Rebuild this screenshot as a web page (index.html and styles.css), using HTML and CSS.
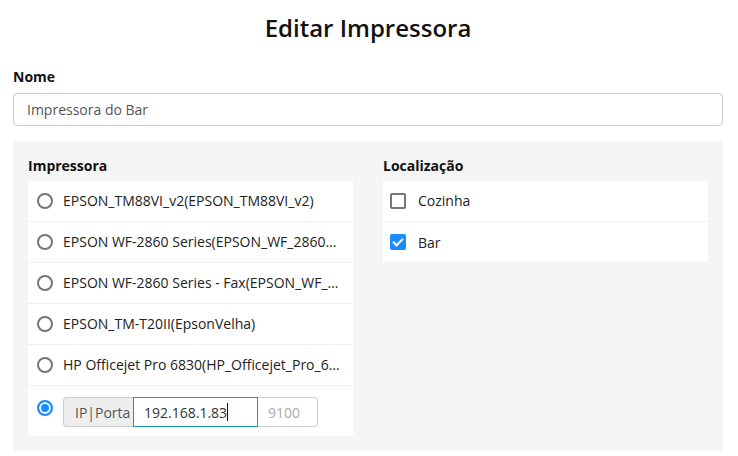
FILE: index.html
```html
<!DOCTYPE html>
<html lang="pt">
<head>
<meta charset="utf-8">
<title>Editar Impressora</title>
<link rel="stylesheet" href="styles.css">
</head>
<body>
<main class="page">
  <h1 class="title">Editar Impressora</h1>

  <label class="label" for="nome">Nome</label>
  <input class="text-input" id="nome" type="text" value="Impressora do Bar">

  <section class="panel">
    <div class="column">
      <div class="label">Impressora</div>
      <ul class="list">
        <li class="row"><input class="radio" type="radio" name="p"><span class="row-text">EPSON_TM88VI_v2(EPSON_TM88VI_v2)</span></li>
        <li class="row"><input class="radio" type="radio" name="p"><span class="row-text">EPSON WF-2860 Series(EPSON_WF_2860_Series)</span></li>
        <li class="row"><input class="radio" type="radio" name="p"><span class="row-text">EPSON WF-2860 Series - Fax(EPSON_WF_2860_Series_Fax)</span></li>
        <li class="row"><input class="radio" type="radio" name="p"><span class="row-text">EPSON_TM-T20II(EpsonVelha)</span></li>
        <li class="row"><input class="radio" type="radio" name="p"><span class="row-text">HP Officejet Pro 6830(HP_Officejet_Pro_6830)</span></li>
        <li class="row row-ip">
          <input class="radio" type="radio" name="p" checked>
          <div class="ip-group">
            <span class="addon">IP|Porta</span>
            <div class="ip-field">192.168.1.83<span class="caret"></span></div>
            <div class="port-field">9100</div>
          </div>
        </li>
      </ul>
    </div>
    <div class="column">
      <div class="label">Localização</div>
      <ul class="list">
        <li class="row row-check"><input class="check" type="checkbox"><span class="row-text">Cozinha</span></li>
        <li class="row row-check"><input class="check" type="checkbox" checked><span class="row-text">Bar</span></li>
      </ul>
    </div>
  </section>
</main>
</body>
</html>
```

FILE: styles.css
```css
* { box-sizing: border-box; }

html, body {
  margin: 0;
  padding: 0;
  background: #ffffff;
}

body {
  font-family: "Open Sans", "Noto Sans", "Liberation Sans", sans-serif;
  color: #222;
  font-size: 14px;
}

.page {
  padding: 0 15px 0 13px;
}

.title {
  margin: 0;
  padding-top: 12px;
  height: 44px;
  font-size: 24px;
  line-height: 32px;
  font-weight: 600;
  text-align: center;
  color: #111;
}

.label {
  display: block;
  font-weight: 700;
  font-size: 14px;
  line-height: 20px;
  color: #111;
}

.page > .label {
  margin-top: 23px;
  margin-bottom: 6px;
}

.text-input {
  display: block;
  width: 100%;
  height: 33px;
  margin: 0;
  padding: 0 13px;
  border: 1px solid #cccccc;
  border-radius: 4px;
  font-family: inherit;
  font-size: 14px;
  color: #555;
  background: #fff;
  outline: none;
}

.panel {
  margin-top: 15px;
  background: #f5f5f5;
  padding: 15px 15px 15px 15px;
  display: grid;
  grid-template-columns: minmax(0, 1fr) minmax(0, 1fr);
  column-gap: 30px;
  align-items: start;
}

.column {
  min-width: 0;
}

.column .label {
  margin-bottom: 5px;
}

.list {
  list-style: none;
  margin: 0;
  padding: 0;
  background: #fff;
}

.row {
  display: flex;
  align-items: center;
  height: 41px;
  padding: 0 12px 1px 9px;
  border-bottom: 1px solid #eeeeee;
  gap: 10px;
}

.row:last-child {
  border-bottom: none;
  height: 40px;
  padding-bottom: 0;
}

.row-text {
  white-space: nowrap;
  overflow: hidden;
  text-overflow: ellipsis;
  min-width: 0;
  font-size: 14px;
  color: #222;
}

.radio {
  appearance: none;
  -webkit-appearance: none;
  flex: none;
  width: 16px;
  height: 16px;
  margin: 0;
  border: 2px solid #767676;
  border-radius: 50%;
  background: #fff;
}

.radio:checked {
  border-color: #1a8cff;
  background: #1a8cff;
  box-shadow: inset 0 0 0 2px #fff;
}

.row-ip {
  height: 50px !important;
  align-items: flex-start;
  padding-top: 11px;
}

.row-ip .radio {
  margin-top: 3px;
}

.ip-group {
  display: flex;
  height: 30px;
  font-size: 14px;
}

.addon {
  display: flex;
  align-items: center;
  padding: 0 11px;
  width: 70px;
  background: #eeeeee;
  border: 1px solid #cccccc;
  border-right: none;
  border-radius: 4px 0 0 4px;
  color: #555;
}

.ip-field {
  display: flex;
  align-items: center;
  width: 125px;
  padding: 0 10px;
  border: 1px solid #1a9aa8;
  color: #333;
  background: #fff;
}

.caret {
  display: inline-block;
  width: 1px;
  height: 18px;
  background: #111;
}

.port-field {
  display: flex;
  align-items: center;
  width: 60px;
  padding: 0 10px;
  border: 1px solid #cccccc;
  border-left: none;
  border-radius: 0 4px 4px 0;
  color: #aaa;
  background: #fff;
}

.row-check {
  padding-left: 7px;
  gap: 12px;
}

.check {
  appearance: none;
  -webkit-appearance: none;
  flex: none;
  position: relative;
  width: 16px;
  height: 16px;
  margin: 0;
  border: 2px solid #767676;
  border-radius: 2px;
  background: #fff;
}

.check:checked {
  border-color: #1a8cff;
  background: #1a8cff;
}

.check:checked::after {
  content: "";
  position: absolute;
  left: 3px;
  top: 0px;
  width: 4px;
  height: 8px;
  border: solid #fff;
  border-width: 0 2px 2px 0;
  transform: rotate(45deg);
}
```
